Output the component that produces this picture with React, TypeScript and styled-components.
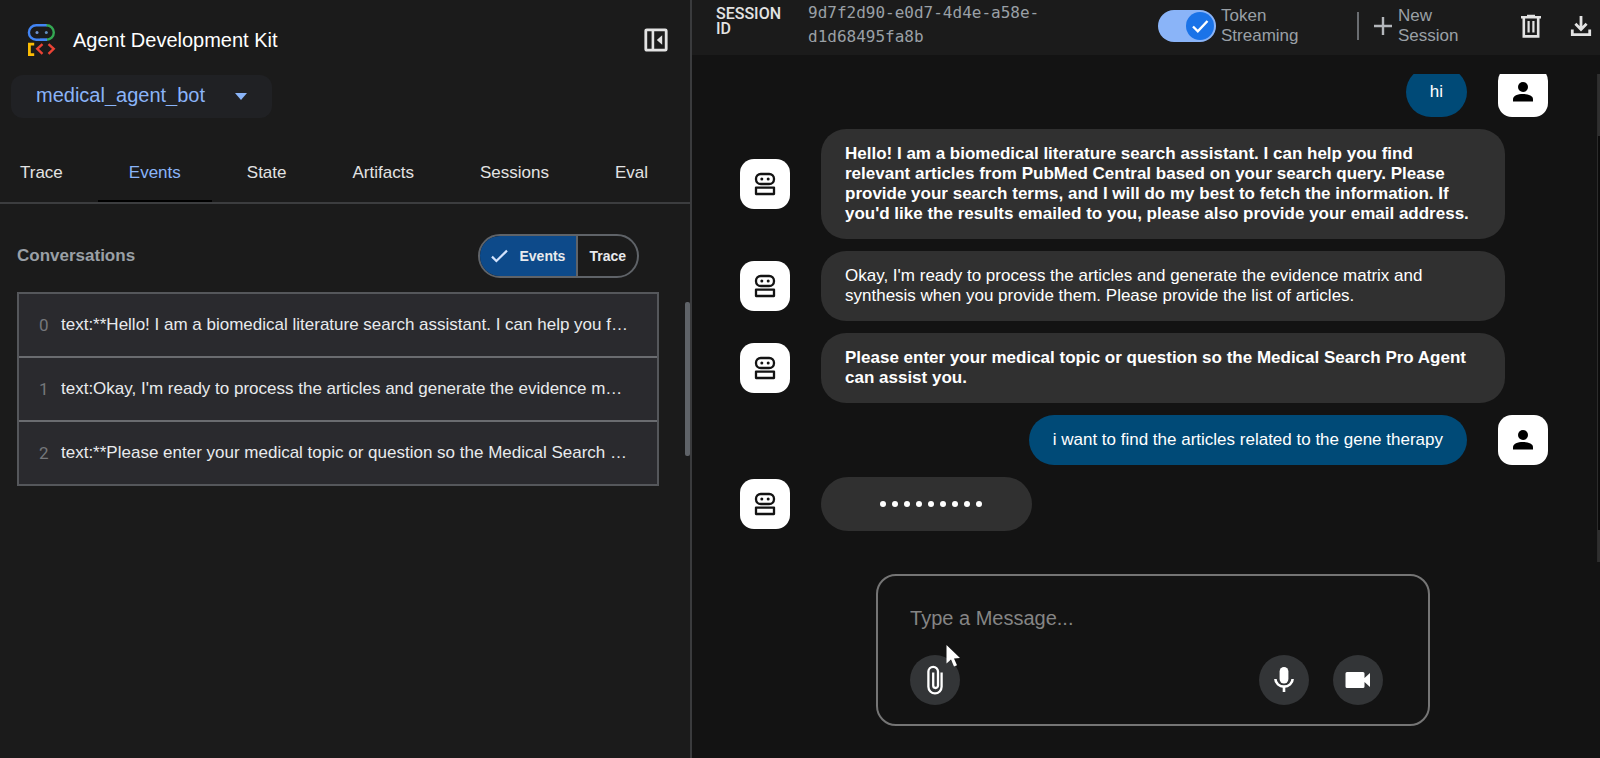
import React from "react";
import styled, { createGlobalStyle, css } from "styled-components";

const GlobalStyle = createGlobalStyle`
  *, *::before, *::after { box-sizing: border-box; }
  body {
    margin: 0;
    background: #131313;
    color: #e8eaed;
    font-family: "Liberation Sans", Arial, sans-serif;
  }
  button, input, select { font: inherit; color: inherit; }
  button { background: none; border: 0; padding: 0; cursor: pointer; }
  svg { flex: none; }
`;

const Shell = styled.div`
  display: flex;
  height: 100vh;
  overflow: hidden;
`;

/* ---------- side panel ---------- */

const SidePanel = styled.aside`
  position: relative;
  flex: 0 0 43.25%;
  min-width: 0;
  background: #1b1b1b;
  border-right: 2px solid #3a3b3d;
`;

const Brand = styled.header`
  display: flex;
  align-items: center;
  height: 75px;
  padding: 5px 20px 0 26px;
`;

const BrandTitle = styled.h1`
  flex: 1;
  margin: 0 0 0 16px;
  font-size: 20px;
  font-weight: 400;
  line-height: 24px;
  color: #fff;
`;

const IconButton = styled.button`
  display: flex;
  align-items: center;
  justify-content: center;
  width: 28px;
  height: 28px;
  flex: none;
  color: #e3e3e3;
`;

const AppPicker = styled.div`
  position: relative;
  display: flex;
  width: 261px;
  margin-left: 11px;
`;

const AppSelect = styled.select`
  appearance: none;
  width: 100%;
  height: 43px;
  padding: 0 48px 4px 25px;
  border: 0;
  border-radius: 12px;
  background: #202124;
  color: #8ab4f8;
  font-size: 20px;
`;

const PickerArrow = styled.svg`
  position: absolute;
  right: 25px;
  top: 18px;
  pointer-events: none;
`;

const Tabs = styled.nav`
  display: flex;
  gap: 66px;
  margin-top: 26px;
  padding-left: 20px;
  height: 60px;
  border-bottom: 2px solid #3c3d3f;
`;

const Tab = styled.button<{ $active?: boolean }>`
  position: relative;
  height: 58px;
  font-size: 17px;
  color: ${(p) => (p.$active ? "#8ab4f8" : "#e3e3e3")};
  ${(p) =>
    p.$active &&
    css`
      &::after {
        content: "";
        position: absolute;
        left: -31px;
        right: -31px;
        bottom: 0;
        height: 2px;
        background: #000;
      }
    `}
`;

const ListHead = styled.div`
  display: flex;
  align-items: center;
  justify-content: space-between;
  margin-top: 30px;
  padding: 0 51px 0 17px;
`;

const ListTitle = styled.h2`
  margin: 0;
  font-size: 17px;
  font-weight: 700;
  color: #9aa0a6;
`;

const Segments = styled.div`
  display: flex;
  height: 44px;
  border: 2px solid #5f6368;
  border-radius: 22px;
  overflow: hidden;
`;

const Segment = styled.button<{ $active?: boolean }>`
  display: flex;
  align-items: center;
  gap: 11px;
  padding: 0 11px;
  font-size: 14px;
  font-weight: 700;
  color: #e8eaed;
  background: ${(p) => (p.$active ? "#0d4a8a" : "transparent")};
  & + & { border-left: 2px solid #5f6368; }
`;

const EventList = styled.ol`
  list-style: none;
  margin: 14px 31px 0 17px;
  padding: 0;
  border: 2px solid #55575b;
`;

const EventRow = styled.li`
  display: flex;
  align-items: center;
  height: 62px;
  padding: 0 16px 0 20px;
  background: #2a2a2e;
  font-size: 17px;
  & + & {
    height: 64px;
    border-top: 2px solid #6a6c70;
  }
`;

const EventIndex = styled.span`
  width: 22px;
  flex: none;
  font-family: Roboto, sans-serif;
  color: #75777b;
`;

const EventText = styled.span`
  min-width: 0;
  white-space: nowrap;
`;

const PanelGrip = styled.div`
  position: absolute;
  right: 0;
  top: 302px;
  width: 5px;
  height: 154px;
  border-radius: 2px;
  background: #5f6368;
`;

/* ---------- chat ---------- */

const Main = styled.main`
  flex: 1;
  min-width: 0;
  display: flex;
  flex-direction: column;
`;

const Toolbar = styled.header`
  display: flex;
  align-items: center;
  flex: none;
  height: 55px;
  padding: 0 5px 0 24px;
  background: #1b1b1b;
  color: #9aa0a6;
`;

const SessionLabel = styled.span`
  width: 72px;
  margin: 0 20px 14px 0;
  font-family: Roboto, sans-serif;
  font-size: 16px;
  font-weight: 500;
  line-height: 15px;
  color: #e3e3e3;
`;

const SessionId = styled.span`
  width: 250px;
  margin-bottom: 5px;
  font-family: "DejaVu Sans Mono", monospace;
  font-size: 16px;
  line-height: 24px;
`;

const ToolbarSpace = styled.span`
  flex: 1;
`;

const ToolGroup = styled.div`
  display: flex;
  align-items: center;
  margin-bottom: 4px;
`;

const StreamSwitch = styled.label`
  display: flex;
  align-items: center;
  gap: 5px;
  width: 142px;
  font-size: 17px;
  line-height: 20px;
`;

const SwitchBox = styled.span`
  position: relative;
  display: flex;
  flex: none;
`;

const SwitchInput = styled.input`
  appearance: none;
  width: 58px;
  height: 32px;
  margin: 0;
  border-radius: 16px;
  background: #8ab4f8;
`;

const SwitchThumb = styled.svg`
  position: absolute;
  right: 2px;
  top: 2px;
  pointer-events: none;
`;

const Divider = styled.span`
  width: 2px;
  height: 28px;
  margin: 0 14px 0 57px;
  background: #6a6d71;
`;

const NewSession = styled.button`
  display: flex;
  align-items: center;
  gap: 5px;
  width: 88px;
  margin-right: 56px;
  font-size: 17px;
  line-height: 20px;
  text-align: left;
`;

const ToolActions = styled.div`
  display: flex;
  gap: 22px;
`;

const Messages = styled.section`
  position: relative;
  flex: 1;
  min-height: 0;
  display: flex;
  flex-direction: column;
  justify-content: flex-end;
  gap: 12px;
  margin-top: 19px;
  padding: 0 52px 31px 48px;
  overflow: hidden;
`;

const MessageRow = styled.div<{ $mine?: boolean }>`
  display: flex;
  flex: none;
  align-items: center;
  gap: 31px;
  justify-content: ${(p) => (p.$mine ? "flex-end" : "flex-start")};
`;

const Avatar = styled.span`
  display: flex;
  flex: none;
  align-items: center;
  justify-content: center;
  width: 50px;
  height: 50px;
  border-radius: 14px;
  background: #fff;
  color: #131313;
`;

const Bubble = styled.p<{ $mine?: boolean; $bold?: boolean }>`
  max-width: calc(100% - 124px);
  margin: 0;
  padding: 15px 24px;
  border-radius: 25px;
  background: ${(p) => (p.$mine ? "#004a77" : "#303030")};
  color: #fff;
  font-size: 17px;
  font-weight: ${(p) => (p.$bold ? 700 : 400)};
  line-height: 20px;
`;

const TypingBubble = styled.div`
  display: flex;
  align-items: center;
  justify-content: center;
  gap: 6px;
  width: 211px;
  height: 54px;
  padding-left: 8px;
  border-radius: 27px;
  background: #303030;
`;

const Dot = styled.span`
  width: 6px;
  height: 6px;
  border-radius: 50%;
  background: #fff;
`;

const ScrollTrack = styled.span`
  position: absolute;
  right: 0;
  top: 0;
  bottom: 0;
  width: 3px;
  border-left: 1px solid #2c2c2c;
  background: linear-gradient(#2f2f2f 0 62px, #0c0c0c 62px calc(100% - 32px), #2f2f2f calc(100% - 32px));
`;

const Composer = styled.form`
  position: relative;
  flex: none;
  width: 61%;
  height: 152px;
  margin: 12px auto 32px;
  left: 7px;
  padding: 25px 45px 19px 32px;
  border: 2px solid #757575;
  border-radius: 20px;
`;

const MessageInput = styled.input`
  display: block;
  width: 100%;
  height: 34px;
  padding: 0;
  border: 0;
  outline: 0;
  background: transparent;
  font-size: 20px;
  &::placeholder { color: #858585; opacity: 1; }
`;

const ComposerActions = styled.div`
  display: flex;
  gap: 24px;
  margin-top: 20px;
`;

const RoundButton = styled.button<{ $first?: boolean }>`
  display: flex;
  align-items: center;
  justify-content: center;
  width: 50px;
  height: 50px;
  margin-right: ${(p) => (p.$first ? "auto" : "0")};
  border-radius: 50%;
  background: #333537;
  color: #fff;
`;

const Pointer = styled.svg`
  position: absolute;
  left: 67px;
  top: 68px;
`;

/* ---------- drawings ---------- */

const Logo = () => (
  <svg width="31" height="34" viewBox="0 0 31 34" fill="none" strokeWidth="2.4" aria-hidden="true">
    <path d="M21 2.2H10.2a7.3 7.3 0 0 0 0 14.6H21" stroke="#4285f4" />
    <path d="M20.5 2.2a7.3 7.3 0 0 1 0 14.6" stroke="#34a853" />
    <path d="M14 16.8h7" stroke="#4285f4" />
    <circle cx="11" cy="9.6" r="1.5" fill="#6f93cf" />
    <circle cx="20.3" cy="9.6" r="1.5" fill="#5f8dbf" />
    <path d="M8.2 21.2H3.4v10.4h4.8" stroke="#fbbc04" strokeWidth="2.8" />
    <path d="M16.5 21.2l-5.2 4.6 5.2 5" stroke="#ea4335" />
    <path d="M22.5 21.2l5.2 4.6-5.2 5" stroke="#ea4335" />
  </svg>
);

const PanelIcon = () => (
  <svg width="24" height="24" viewBox="0 0 24 24" fill="none" aria-hidden="true">
    <rect x="1.8" y="1.8" width="20.4" height="20.4" rx="1" stroke="currentColor" strokeWidth="2.8" />
    <path d="M8.9 1v22" stroke="currentColor" strokeWidth="2.6" />
    <path d="M18.2 7.2v9.6L12.800 12z" fill="currentColor" />
  </svg>
);

const CheckIcon = () => (
  <svg width="17" height="14" viewBox="0 0 17 14" fill="none" stroke="#d3e3fd" strokeWidth="2.2" aria-hidden="true">
    <path d="M1 7.600l4.400 4.400L16 1.600" />
  </svg>
);

const BotIcon = () => (
  <svg width="22" height="24" viewBox="0 0 22 24" fill="none" stroke="currentColor" strokeWidth="2.3" aria-hidden="true">
    <rect x="2" y="2" width="18" height="10" rx="4.8" />
    <circle cx="7.8" cy="7" r="1.5" fill="currentColor" stroke="none" />
    <circle cx="14.2" cy="7" r="1.5" fill="currentColor" stroke="none" />
    <path d="M2 22v-6.400h18V22z" strokeLinejoin="round" />
  </svg>
);

const PersonIcon = () => (
  <svg width="22" height="22" viewBox="0 0 22 22" fill="#000" aria-hidden="true">
    <circle cx="11" cy="6" r="5" />
    <path d="M1 20.6v-2.4c0-3.4 4.6-5.2 10-5.2s10 1.8 10 5.2v2.4z" />
  </svg>
);

const PlusIcon = () => (
  <svg width="20" height="20" viewBox="0 0 20 20" fill="none" stroke="#b4b7bb" strokeWidth="2.4" aria-hidden="true">
    <path d="M10 1v18M1 10h18" />
  </svg>
);

const TrashIcon = () => (
  <svg width="22" height="26" viewBox="0 0 22 26" fill="none" stroke="currentColor" strokeWidth="2.6" aria-hidden="true">
    <path d="M1 4.2h20M7 3h8M3.8 4.2v19.2h14.4V4.2" />
    <path d="M8.6 8v11.6M13.4 8v11.6" strokeWidth="2.2" />
  </svg>
);

const DownloadIcon = () => (
  <svg width="22" height="22" viewBox="0 0 22 22" fill="none" stroke="currentColor" strokeWidth="2.8" aria-hidden="true">
    <path d="M11 1v13M5.4 8.800L11 14.4l5.6-5.6M2.3 14.5v5.200h17.4v-5.2" />
  </svg>
);

const ClipIcon = () => (
  <svg width="18" height="30" viewBox="0 0 18 30" fill="none" stroke="currentColor" strokeWidth="2.3" aria-hidden="true">
    <path d="M15.6 7.5v14.3a6.6 6.6 0 0 1-13.2 0V6.6a4.8 4.8 0 0 1 9.6 0v14a2.400 2.400 0 0 1-4.8 0V7.5" />
  </svg>
);

const MicIcon = () => (
  <svg width="20" height="26" viewBox="0 0 20 26" fill="none" aria-hidden="true">
    <rect x="5.6" y="0" width="8.8" height="16.5" rx="4.4" fill="currentColor" />
    <path d="M1.4 12a8.6 7.6 0 0 0 17.2 0M10 19.6V25" stroke="currentColor" strokeWidth="2.6" />
  </svg>
);

const VideoIcon = () => (
  <svg width="26" height="18" viewBox="0 0 26 18" fill="currentColor" aria-hidden="true">
    <path d="M2 1h16a1.500 1.500 0 0 1 1.500 1.500V7L25 2v14l-5.500-5v4.500A1.500 1.500 0 0 1 18 17H2a1.500 1.500 0 0 1-1.500-1.500v-13A1.500 1.500 0 0 1 2 1z" />
  </svg>
);

/* ---------- data ---------- */

const tabs = ["Trace", "Events", "State", "Artifacts", "Sessions", "Eval"];

const events = [
  "text:**Hello! I am a biomedical literature search assistant. I can help you f…",
  "text:Okay, I'm ready to process the articles and generate the evidence m…",
  "text:**Please enter your medical topic or question so the Medical Search …",
];

const messages: { from: "user" | "bot"; text: string; bold?: boolean }[] = [
  { from: "user", text: "hi" },
  {
    from: "bot",
    bold: true,
    text: "Hello! I am a biomedical literature search assistant. I can help you find relevant articles from PubMed Central based on your search query. Please provide your search terms, and I will do my best to fetch the information. If you'd like the results emailed to you, please also provide your email address.",
  },
  {
    from: "bot",
    text: "Okay, I'm ready to process the articles and generate the evidence matrix and synthesis when you provide them. Please provide the list of articles.",
  },
  {
    from: "bot",
    bold: true,
    text: "Please enter your medical topic or question so the Medical Search Pro Agent can assist you.",
  },
  { from: "user", text: "i want to find the articles related to the gene therapy" },
];

export default function App() {
  return (
    <>
      <GlobalStyle />
      <Shell>
        <SidePanel>
          <Brand>
            <Logo />
            <BrandTitle>Agent Development Kit</BrandTitle>
            <IconButton type="button" aria-label="Collapse panel">
              <PanelIcon />
            </IconButton>
          </Brand>
          <AppPicker>
            <AppSelect aria-label="Agent" defaultValue="medical_agent_bot">
              <option>medical_agent_bot</option>
            </AppSelect>
            <PickerArrow width="12" height="7" viewBox="0 0 12 7" aria-hidden="true">
              <path d="M0 0h12L6 7z" fill="#8ab4f8" />
            </PickerArrow>
          </AppPicker>
          <Tabs>
            {tabs.map((name) => (
              <Tab key={name} type="button" $active={name === "Events"}>
                {name}
              </Tab>
            ))}
          </Tabs>
          <ListHead>
            <ListTitle>Conversations</ListTitle>
            <Segments>
              <Segment type="button" $active>
                <CheckIcon />
                Events
              </Segment>
              <Segment type="button">Trace</Segment>
            </Segments>
          </ListHead>
          <EventList>
            {events.map((text, i) => (
              <EventRow key={i}>
                <EventIndex>{i}</EventIndex>
                <EventText>{text}</EventText>
              </EventRow>
            ))}
          </EventList>
          <PanelGrip />
        </SidePanel>

        <Main>
          <Toolbar>
            <SessionLabel>SESSION ID</SessionLabel>
            <SessionId>9d7f2d90-e0d7-4d4e-a58e-d1d68495fa8b</SessionId>
            <ToolbarSpace />
            <ToolGroup>
              <StreamSwitch>
                <SwitchBox>
                  <SwitchInput type="checkbox" defaultChecked />
                  <SwitchThumb width="28" height="28" viewBox="0 0 28 28" aria-hidden="true">
                    <circle cx="14" cy="14" r="14" fill="#1a73e8" />
                    <path d="M7 14.5l4.8 4.8L21.5 9" fill="none" stroke="#fff" strokeWidth="2.4" />
                  </SwitchThumb>
                </SwitchBox>
                Token Streaming
              </StreamSwitch>
              <Divider />
              <NewSession type="button">
                <PlusIcon />
                <span>New Session</span>
              </NewSession>
              <ToolActions>
                <IconButton type="button" aria-label="Delete session">
                  <TrashIcon />
                </IconButton>
                <IconButton type="button" aria-label="Download session">
                  <DownloadIcon />
                </IconButton>
              </ToolActions>
            </ToolGroup>
          </Toolbar>

          <Messages>
            {messages.map((m) =>
              m.from === "user" ? (
                <MessageRow key={m.text} $mine>
                  <Bubble $mine>{m.text}</Bubble>
                  <Avatar>
                    <PersonIcon />
                  </Avatar>
                </MessageRow>
              ) : (
                <MessageRow key={m.text}>
                  <Avatar>
                    <BotIcon />
                  </Avatar>
                  <Bubble $bold={m.bold}>{m.text}</Bubble>
                </MessageRow>
              )
            )}
            <MessageRow>
              <Avatar>
                <BotIcon />
              </Avatar>
              <TypingBubble>
                {Array.from({ length: 9 }, (_, i) => (
                  <Dot key={i} />
                ))}
              </TypingBubble>
            </MessageRow>
            <ScrollTrack />
          </Messages>

          <Composer onSubmit={(e) => e.preventDefault()}>
            <MessageInput aria-label="Message" placeholder="Type a Message..." />
            <ComposerActions>
              <RoundButton type="button" $first aria-label="Attach file">
                <ClipIcon />
              </RoundButton>
              <RoundButton type="button" aria-label="Use microphone">
                <MicIcon />
              </RoundButton>
              <RoundButton type="button" aria-label="Use camera">
                <VideoIcon />
              </RoundButton>
            </ComposerActions>
            <Pointer width="16" height="24" viewBox="0 0 16 24" aria-hidden="true">
              <path d="M1.5 1v18.500l4.5-4 3 7 3-1.300-3-6.700 6-.5z" fill="#fff" />
            </Pointer>
          </Composer>
        </Main>
      </Shell>
    </>
  );
}
